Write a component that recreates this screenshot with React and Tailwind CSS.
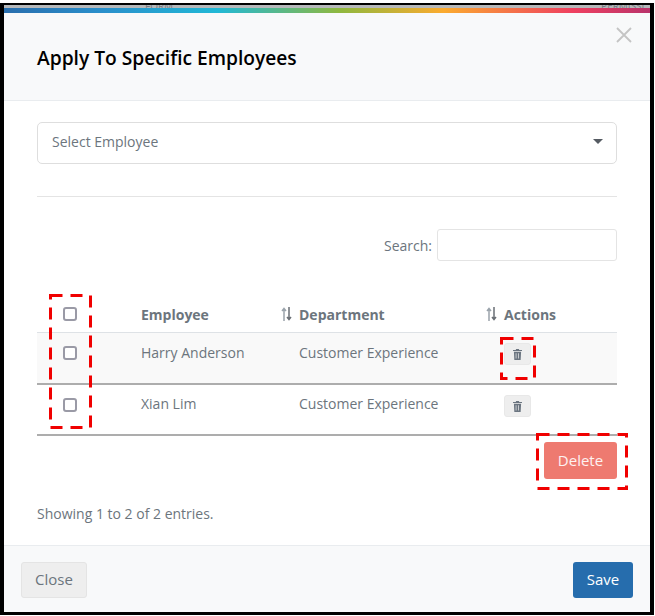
const rows = [
  { name: 'Harry Anderson', dept: 'Customer Experience', row: 'h-[52px] pt-[9px] bg-[#f9f9f9] border-b-2 border-[#adadad]', box: 'pt-[4px]', del: 'pt-px' },
  { name: 'Xian Lim', dept: 'Customer Experience', row: 'h-[51px] pt-[8px] bg-white border-b-2 border-[#adadad]', box: 'pt-[5px]', del: 'pt-[2px]' },
];

function SortIcon() {
  return (
    <svg width="11" height="14" viewBox="0 0 11 14" className="shrink-0" fill="none" strokeWidth="1.5">
      <path d="M3 14V1.5M1 4l2-2.5L5 4" stroke="#9aa3ab" />
      <path d="M8 0v12.5M6 10l2 2.5 2-2.5" stroke="#6a6f75" />
    </svg>
  );
}

function CheckBox() {
  return <span className="block w-[14px] h-[14px] rounded-[3px] border-2 border-[#9a9aa6] bg-white" />;
}

function TrashButton() {
  return (
    <button className="flex items-center justify-center w-[27px] h-[22px] rounded-[3px] bg-[#eeeeee] border border-[#e8e8e8]">
      <svg width="9" height="11" viewBox="0 0 10 12" fill="#6b7580">
        <path d="M3.5 0h3l.5 1h3v1.2H0V1h3zM1 3h8l-.5 9h-7zM3 4.5v6h.8v-6zm2.6 0v6h.8v-6z" fillRule="evenodd" />
      </svg>
    </button>
  );
}

export default function App() {
  return (
    <div className="relative w-[655px] h-[616px] overflow-hidden bg-white font-['Open_Sans',sans-serif] text-[14px] text-[#6c757d]">
      <div className="mt-[3px] w-[654px] h-[612px] border-x-4 border-t-2 border-b-[3px] border-black flex flex-col bg-white overflow-hidden">
        {/* page behind the modal */}
        <div className="h-[3px] bg-[#b6b8ba] flex overflow-hidden shrink-0 text-[10px] leading-[3px] text-[#777c82]">
          <span className="ml-[141px]">FORM</span>
          <span className="ml-[428px]">PERMISSI</span>
        </div>
        <div className="h-[5px] shrink-0 bg-[linear-gradient(90deg,#2a6ead_0%,#2a8fcb_15%,#21b8d6_33%,#8fb83f_52%,#fbab2f_68%,#ef4060_88%,#b9336b_100%)]" />

        {/* header */}
        <div className="relative h-[88px] shrink-0 bg-[#f8f9fa] border-b border-[#e9ecef] pl-[33px] flex items-center">
          <h4 className="text-[19.2px] font-semibold text-black leading-none mt-[3px]">Apply To Specific Employees</h4>
          <svg width="16" height="16" viewBox="0 0 16 16" className="absolute right-[18px] top-[14px]" stroke="#c4c4c4" strokeWidth="1.8">
            <path d="M1 1l14 14M15 1L1 15" />
          </svg>
        </div>

        {/* body */}
        <div className="flex-1 px-[33px] pt-[21px]">
          <div className="h-[42px] rounded-[5px] border border-[#dedede] flex items-center justify-between pl-[14px] pr-[13px] pb-[3px]">
            <span>Select Employee</span>
            <span className="w-0 h-0 border-x-[5px] border-x-transparent border-t-[5px] border-t-[#555b62]" />
          </div>
          <div className="mt-[32px] border-t border-[#e4e4e4]" />

          <div className="mt-[32px] flex items-center justify-end gap-[5px]">
            <span>Search:</span>
            <div className="w-[180px] h-[32px] rounded-[3px] border border-[#e4e4e4]" />
          </div>

          {/* table */}
          <div className="mt-[34px]">
            <div className="h-[38px] grid grid-cols-[104px_158px_205px_113px] items-center border-b border-[#dee2e6] font-bold">
              <div className="pl-[26px]"><CheckBox /></div>
              <div className="relative pt-[2px]">Employee<span className="absolute right-[7px] top-[5px]"><SortIcon /></span></div>
              <div className="relative pt-[2px]">Department<span className="absolute right-[7px] top-[5px]"><SortIcon /></span></div>
              <div className="pt-[2px]">Actions</div>
            </div>
            {rows.map(r => (
              <div key={r.name} className={`grid grid-cols-[104px_158px_205px_113px] items-start ${r.row}`}>
                <div className={`pl-[26px] ${r.box}`}><CheckBox /></div>
                <div>{r.name}</div>
                <div>{r.dept}</div>
                <div className={r.del}><TrashButton /></div>
              </div>
            ))}
          </div>

          <div className="flex justify-end mt-[6px]">
            <button className="w-[73px] h-[37px] rounded-[3px] bg-[#ee7a70] text-white/90 text-[15px]">Delete</button>
          </div>
          <p className="mt-[24px]">Showing 1 to 2 of 2 entries.</p>
        </div>

        {/* footer */}
        <div className="h-[67px] shrink-0 bg-[#f8f9fa] border-t border-[#e9ecef] flex items-start justify-between pl-[17px] pr-[17px] pt-[16px]">
          <button className="w-[66px] h-[36px] rounded-[3px] bg-[#eeeeee] border border-[#e4e4e4] text-[15px] pb-[2px]">Close</button>
          <button className="w-[60px] h-[36px] rounded-[3px] bg-[#266dad] text-white text-[15px] pb-[2px]">Save</button>
        </div>
      </div>

      {/* annotation boxes */}
      <svg width="43" height="135" className="absolute left-[49px] top-[294px]" fill="none" stroke="#f00000" strokeWidth="3" strokeDasharray="12 8">
        <rect x="1.5" y="1.5" width="40" height="132" />
      </svg>
      <svg width="36" height="43" className="absolute left-[500px] top-[337px]" fill="none" stroke="#f00000" strokeWidth="3" strokeDasharray="12 8">
        <rect x="1.5" y="1.5" width="33" height="40" />
      </svg>
      <svg width="92" height="57" className="absolute left-[536px] top-[433px]" fill="none" stroke="#f00000" strokeWidth="3" strokeDasharray="12 8">
        <rect x="1.5" y="1.5" width="89" height="54" />
      </svg>
    </div>
  );
}
